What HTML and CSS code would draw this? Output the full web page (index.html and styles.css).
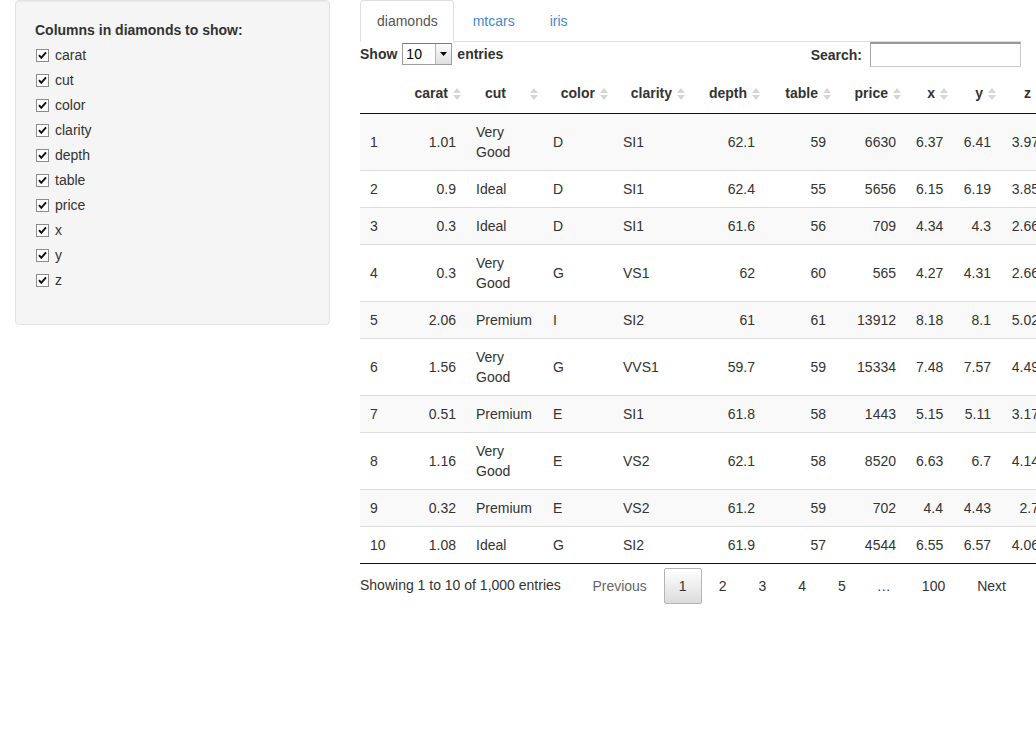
FILE: index.html
```html
<!DOCTYPE html>
<html>
<head>
<meta charset="utf-8">
<title>diamonds</title>
<link rel="stylesheet" href="styles.css">
</head>
<body>
<div class="page">
  <aside class="sidebar">
    <div class="well">
      <div class="form-group">
        <div class="control-label">Columns in diamonds to show:</div>
        <div class="options">
          <label class="cb"><span class="box"><svg width="13" height="13" viewBox="0 0 13 13"><rect x="0.5" y="0.5" width="12" height="12" fill="#fff" stroke="#8c8c8c"/><path d="M3 6.2 L5.3 8.8 L10 3.4" fill="none" stroke="#111" stroke-width="2"/></svg></span><span>carat</span></label>
          <label class="cb"><span class="box"><svg width="13" height="13" viewBox="0 0 13 13"><rect x="0.5" y="0.5" width="12" height="12" fill="#fff" stroke="#8c8c8c"/><path d="M3 6.2 L5.3 8.8 L10 3.4" fill="none" stroke="#111" stroke-width="2"/></svg></span><span>cut</span></label>
          <label class="cb"><span class="box"><svg width="13" height="13" viewBox="0 0 13 13"><rect x="0.5" y="0.5" width="12" height="12" fill="#fff" stroke="#8c8c8c"/><path d="M3 6.2 L5.3 8.8 L10 3.4" fill="none" stroke="#111" stroke-width="2"/></svg></span><span>color</span></label>
          <label class="cb"><span class="box"><svg width="13" height="13" viewBox="0 0 13 13"><rect x="0.5" y="0.5" width="12" height="12" fill="#fff" stroke="#8c8c8c"/><path d="M3 6.2 L5.3 8.8 L10 3.4" fill="none" stroke="#111" stroke-width="2"/></svg></span><span>clarity</span></label>
          <label class="cb"><span class="box"><svg width="13" height="13" viewBox="0 0 13 13"><rect x="0.5" y="0.5" width="12" height="12" fill="#fff" stroke="#8c8c8c"/><path d="M3 6.2 L5.3 8.8 L10 3.4" fill="none" stroke="#111" stroke-width="2"/></svg></span><span>depth</span></label>
          <label class="cb"><span class="box"><svg width="13" height="13" viewBox="0 0 13 13"><rect x="0.5" y="0.5" width="12" height="12" fill="#fff" stroke="#8c8c8c"/><path d="M3 6.2 L5.3 8.8 L10 3.4" fill="none" stroke="#111" stroke-width="2"/></svg></span><span>table</span></label>
          <label class="cb"><span class="box"><svg width="13" height="13" viewBox="0 0 13 13"><rect x="0.5" y="0.5" width="12" height="12" fill="#fff" stroke="#8c8c8c"/><path d="M3 6.2 L5.3 8.8 L10 3.4" fill="none" stroke="#111" stroke-width="2"/></svg></span><span>price</span></label>
          <label class="cb"><span class="box"><svg width="13" height="13" viewBox="0 0 13 13"><rect x="0.5" y="0.5" width="12" height="12" fill="#fff" stroke="#8c8c8c"/><path d="M3 6.2 L5.3 8.8 L10 3.4" fill="none" stroke="#111" stroke-width="2"/></svg></span><span>x</span></label>
          <label class="cb"><span class="box"><svg width="13" height="13" viewBox="0 0 13 13"><rect x="0.5" y="0.5" width="12" height="12" fill="#fff" stroke="#8c8c8c"/><path d="M3 6.2 L5.3 8.8 L10 3.4" fill="none" stroke="#111" stroke-width="2"/></svg></span><span>y</span></label>
          <label class="cb"><span class="box"><svg width="13" height="13" viewBox="0 0 13 13"><rect x="0.5" y="0.5" width="12" height="12" fill="#fff" stroke="#8c8c8c"/><path d="M3 6.2 L5.3 8.8 L10 3.4" fill="none" stroke="#111" stroke-width="2"/></svg></span><span>z</span></label>
        </div>
      </div>
    </div>
  </aside>

  <main class="main">
    <ul class="tabs">
      <li class="active"><a>diamonds</a></li>
      <li><a>mtcars</a></li>
      <li><a>iris</a></li>
    </ul>

    <div class="dt-top">
      <div class="dt-length">Show <span class="select"><span class="select-val">10</span><span class="select-btn"><svg width="7" height="4" viewBox="0 0 7 4"><path d="M0 0 L7 0 L3.5 4 Z" fill="#000"/></svg></span></span> entries</div>
      <div class="dt-filter">Search: <span class="search-input"></span></div>
    </div>

    <table class="dt">
      <colgroup>
        <col class="w-num"><col class="w-carat"><col class="w-cut"><col class="w-color"><col class="w-clarity"><col class="w-depth"><col class="w-table"><col class="w-price"><col class="w-x"><col class="w-y"><col class="w-z">
      </colgroup>
      <thead>
        <tr>
          <th class="blank"></th>
          <th>carat<span class="sort-ico"><svg width="8" height="12" viewBox="0 0 8 12"><path d="M4 0 L8 5 L0 5 Z M0 7 L8 7 L4 12 Z" fill="#d6d6d6"/></svg></span></th>
          <th class="cut">cut<span class="sort-ico"><svg width="8" height="12" viewBox="0 0 8 12"><path d="M4 0 L8 5 L0 5 Z M0 7 L8 7 L4 12 Z" fill="#d6d6d6"/></svg></span></th>
          <th>color<span class="sort-ico"><svg width="8" height="12" viewBox="0 0 8 12"><path d="M4 0 L8 5 L0 5 Z M0 7 L8 7 L4 12 Z" fill="#d6d6d6"/></svg></span></th>
          <th>clarity<span class="sort-ico"><svg width="8" height="12" viewBox="0 0 8 12"><path d="M4 0 L8 5 L0 5 Z M0 7 L8 7 L4 12 Z" fill="#d6d6d6"/></svg></span></th>
          <th>depth<span class="sort-ico"><svg width="8" height="12" viewBox="0 0 8 12"><path d="M4 0 L8 5 L0 5 Z M0 7 L8 7 L4 12 Z" fill="#d6d6d6"/></svg></span></th>
          <th>table<span class="sort-ico"><svg width="8" height="12" viewBox="0 0 8 12"><path d="M4 0 L8 5 L0 5 Z M0 7 L8 7 L4 12 Z" fill="#d6d6d6"/></svg></span></th>
          <th>price<span class="sort-ico"><svg width="8" height="12" viewBox="0 0 8 12"><path d="M4 0 L8 5 L0 5 Z M0 7 L8 7 L4 12 Z" fill="#d6d6d6"/></svg></span></th>
          <th>x<span class="sort-ico"><svg width="8" height="12" viewBox="0 0 8 12"><path d="M4 0 L8 5 L0 5 Z M0 7 L8 7 L4 12 Z" fill="#d6d6d6"/></svg></span></th>
          <th>y<span class="sort-ico"><svg width="8" height="12" viewBox="0 0 8 12"><path d="M4 0 L8 5 L0 5 Z M0 7 L8 7 L4 12 Z" fill="#d6d6d6"/></svg></span></th>
          <th>z<span class="sort-ico"><svg width="8" height="12" viewBox="0 0 8 12"><path d="M4 0 L8 5 L0 5 Z M0 7 L8 7 L4 12 Z" fill="#d6d6d6"/></svg></span></th>
        </tr>
      </thead>
      <tbody>
        <tr><td>1</td><td class="r">1.01</td><td>Very Good</td><td>D</td><td>SI1</td><td class="r">62.1</td><td class="r">59</td><td class="r">6630</td><td class="r">6.37</td><td class="r">6.41</td><td class="r">3.97</td></tr>
        <tr><td>2</td><td class="r">0.9</td><td>Ideal</td><td>D</td><td>SI1</td><td class="r">62.4</td><td class="r">55</td><td class="r">5656</td><td class="r">6.15</td><td class="r">6.19</td><td class="r">3.85</td></tr>
        <tr><td>3</td><td class="r">0.3</td><td>Ideal</td><td>D</td><td>SI1</td><td class="r">61.6</td><td class="r">56</td><td class="r">709</td><td class="r">4.34</td><td class="r">4.3</td><td class="r">2.66</td></tr>
        <tr><td>4</td><td class="r">0.3</td><td>Very Good</td><td>G</td><td>VS1</td><td class="r">62</td><td class="r">60</td><td class="r">565</td><td class="r">4.27</td><td class="r">4.31</td><td class="r">2.66</td></tr>
        <tr><td>5</td><td class="r">2.06</td><td>Premium</td><td>I</td><td>SI2</td><td class="r">61</td><td class="r">61</td><td class="r">13912</td><td class="r">8.18</td><td class="r">8.1</td><td class="r">5.02</td></tr>
        <tr><td>6</td><td class="r">1.56</td><td>Very Good</td><td>G</td><td>VVS1</td><td class="r">59.7</td><td class="r">59</td><td class="r">15334</td><td class="r">7.48</td><td class="r">7.57</td><td class="r">4.49</td></tr>
        <tr><td>7</td><td class="r">0.51</td><td>Premium</td><td>E</td><td>SI1</td><td class="r">61.8</td><td class="r">58</td><td class="r">1443</td><td class="r">5.15</td><td class="r">5.11</td><td class="r">3.17</td></tr>
        <tr><td>8</td><td class="r">1.16</td><td>Very Good</td><td>E</td><td>VS2</td><td class="r">62.1</td><td class="r">58</td><td class="r">8520</td><td class="r">6.63</td><td class="r">6.7</td><td class="r">4.14</td></tr>
        <tr><td>9</td><td class="r">0.32</td><td>Premium</td><td>E</td><td>VS2</td><td class="r">61.2</td><td class="r">59</td><td class="r">702</td><td class="r">4.4</td><td class="r">4.43</td><td class="r">2.7</td></tr>
        <tr><td>10</td><td class="r">1.08</td><td>Ideal</td><td>G</td><td>SI2</td><td class="r">61.9</td><td class="r">57</td><td class="r">4544</td><td class="r">6.55</td><td class="r">6.57</td><td class="r">4.06</td></tr>
      </tbody>
    </table>

    <div class="dt-bottom">
      <div class="dt-info">Showing 1 to 10 of 1,000 entries</div>
      <div class="dt-paginate">
        <a class="pbtn disabled">Previous</a>
        <a class="pbtn current">1</a>
        <a class="pbtn">2</a>
        <a class="pbtn">3</a>
        <a class="pbtn">4</a>
        <a class="pbtn">5</a>
        <span class="ellipsis">…</span>
        <a class="pbtn">100</a>
        <a class="pbtn">Next</a>
      </div>
    </div>
  </main>
</div>
</body>
</html>
```

FILE: styles.css
```css
* { box-sizing: border-box; }

html, body {
  margin: 0;
  padding: 0;
  overflow-x: hidden;
  background: #fff;
}

body {
  font-family: "Liberation Sans", Arial, Helvetica, sans-serif;
  font-size: 14px;
  line-height: 20px;
  color: #333;
}

.page {
  display: flex;
  align-items: flex-start;
  padding: 0 15px;
  width: 1036px;
}

/* ---------- sidebar ---------- */
.sidebar {
  width: 315px;
  flex: none;
}

.well {
  background: #f5f5f5;
  border: 1px solid #e3e3e3;
  border-radius: 4px;
  box-shadow: inset 0 1px 1px rgba(0,0,0,0.05);
  padding: 19px;
}

.form-group {
  margin-bottom: 15px;
}

.control-label {
  font-weight: bold;
  margin-bottom: 5px;
}

.options {
  display: flex;
  flex-direction: column;
  gap: 5px;
}

.cb {
  display: flex;
  align-items: center;
  height: 20px;
  gap: 6px;
  padding-left: 1px;
}

.box {
  display: block;
  width: 13px;
  height: 13px;
}
.box svg { display: block; }

/* ---------- main ---------- */
.main {
  margin-left: 30px;
  flex: 1;
  min-width: 0;
}

.tabs {
  list-style: none;
  margin: 0;
  padding: 0;
  display: flex;
  border-bottom: 1px solid #ddd;
}

.tabs li {
  margin-bottom: -1px;
  margin-right: 2px;
}

.tabs a {
  display: block;
  padding: 10px 15px 10px 16px;
  line-height: 20px;
  border: 1px solid transparent;
  border-radius: 4px 4px 0 0;
  color: #428bca;
}

.tabs li.active a {
  color: #555;
  background: #fff;
  border-color: #ddd #ddd transparent;
}

.dt-top {
  display: flex;
  justify-content: space-between;
  align-items: center;
  height: 25px;
  margin-bottom: 6px;
  font-weight: bold;
}

.dt-length {
  display: flex;
  align-items: center;
  gap: 5px;
  margin-top: -2px;
}

.select {
  display: flex;
  width: 50px;
  height: 22px;
  border: 1px solid #9d9d9d;
  border-top-color: #7a7a7a;
  background: #fff;
  font-weight: normal;
  color: #000;
}

.select-val {
  flex: 1;
  padding-left: 3px;
  line-height: 20px;
}

.select-btn {
  width: 16px;
  display: flex;
  align-items: center;
  justify-content: center;
  border-left: 1px solid #b5b5b5;
  background: linear-gradient(to bottom, #fdfdfd, #dedede);
}
.select-btn svg { display: block; }

.dt-filter {
  display: flex;
  align-items: center;
  gap: 8px;
}

.search-input {
  display: block;
  width: 151px;
  height: 25px;
  border: 1px solid #c9c9c9;
  border-top: 2px solid #9a9a9a;
  border-left-color: #a5a5a5;
  background: #fff;
}

/* ---------- table ---------- */
.dt {
  border-collapse: collapse;
  table-layout: fixed;
  width: 689px;
}

.w-num { width: 37px; }
.w-carat { width: 69px; }
.w-cut { width: 77px; }
.w-color { width: 70px; }
.w-clarity { width: 77px; }
.w-depth { width: 75px; }
.w-table { width: 71px; }
.w-price { width: 70px; }
.w-x { width: 47px; }
.w-y { width: 48px; }
.w-z { width: 48px; }

.dt th {
  font-weight: bold;
  padding: 10px 18px 10px 10px;
  text-align: right;
  border-bottom: 1px solid #111;
  position: relative;
  white-space: nowrap;
}

.dt th.cut {
  text-align: left;
  padding-left: 19px;
}

.sort-ico {
  position: absolute;
  right: 5px;
  top: 15px;
  width: 8px;
  height: 12px;
}
.sort-ico svg { display: block; }

.dt td {
  padding: 8px 10px;
  border-top: 1px solid #ddd;
  text-align: left;
  vertical-align: middle;
}

.dt tbody tr:first-child td { border-top: none; }

.dt td.r { text-align: right; }

.dt tbody tr:nth-child(odd) { background: #f9f9f9; }

.dt tbody { border-bottom: 1px solid #111; }

/* ---------- bottom ---------- */
.dt-bottom {
  display: flex;
  justify-content: space-between;
  align-items: flex-start;
}

.dt-info {
  padding-top: 11px;
}

.dt-paginate {
  display: flex;
  align-items: center;
  gap: 2px;
  padding-top: 4px;
}

.pbtn {
  display: block;
  padding: 7px 14px;
  line-height: 20px;
  border: 1px solid transparent;
  border-radius: 2px;
  color: #333;
}

.pbtn.disabled { color: #666; }

.pbtn.current {
  border-color: #b4b4b4;
  background: linear-gradient(to bottom, #ffffff 0%, #dcdcdc 100%);
}

.ellipsis {
  padding: 0 14px;
}
```
